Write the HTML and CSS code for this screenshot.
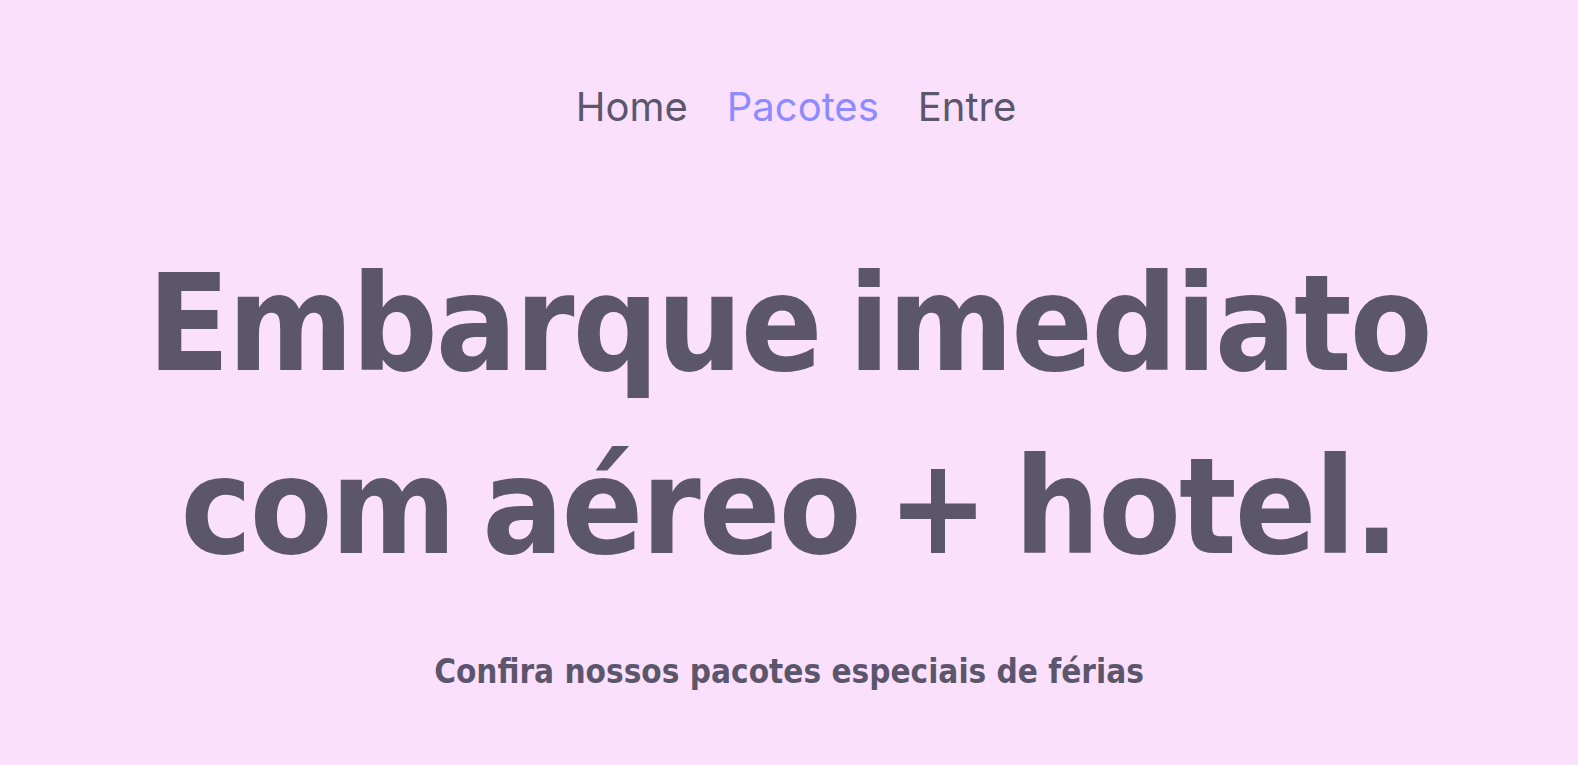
FILE: index.html
```html
<!DOCTYPE html>
<html lang="pt-BR">
<head>
<meta charset="utf-8">
<title>Pacotes</title>
<link rel="stylesheet" href="styles.css">
</head>
<body>
<div class="page">
  <nav class="nav">
    <a class="nav-link" href="#">Home</a>
    <a class="nav-link active" href="#">Pacotes</a>
    <a class="nav-link" href="#">Entre</a>
  </nav>
  <header class="hero">
    <h1 class="hero-title">Embarque imediato<br>com aéreo + hotel.</h1>
    <p class="hero-sub">Confira nossos pacotes especiais de férias</p>
  </header>
</div>
</body>
</html>
```

FILE: styles.css
```css
html, body {
  margin: 0;
  padding: 0;
  background: #fbe0fe;
}
.page {
  min-height: 765px;
  display: flex;
  flex-direction: column;
  align-items: center;
  color: #5c566c;
}
.nav {
  display: flex;
  gap: 39px;
  padding-top: 83px;
  margin-left: 14px;
  font-family: Inter, "Noto Sans", sans-serif;
  font-size: 40px;
  line-height: 48px;
}
.nav-link {
  color: #5c566c;
  text-decoration: none;
}
.nav-link.active {
  color: #8d8bfd;
}
.hero {
  display: flex;
  flex-direction: column;
  align-items: center;
  text-align: center;
}
.hero-title {
  margin: 102px 0 0;
  font-family: "DejaVu Sans Condensed", "DejaVu Sans", sans-serif;
  font-weight: 700;
  font-size: 134px;
  line-height: 183px;
  letter-spacing: -2px;
  word-spacing: -12px;
}
.hero-sub {
  margin: 53px 0 0;
  font-family: "DejaVu Sans Condensed", "DejaVu Sans", sans-serif;
  font-weight: 700;
  font-size: 33px;
  line-height: 40px;
}
```
